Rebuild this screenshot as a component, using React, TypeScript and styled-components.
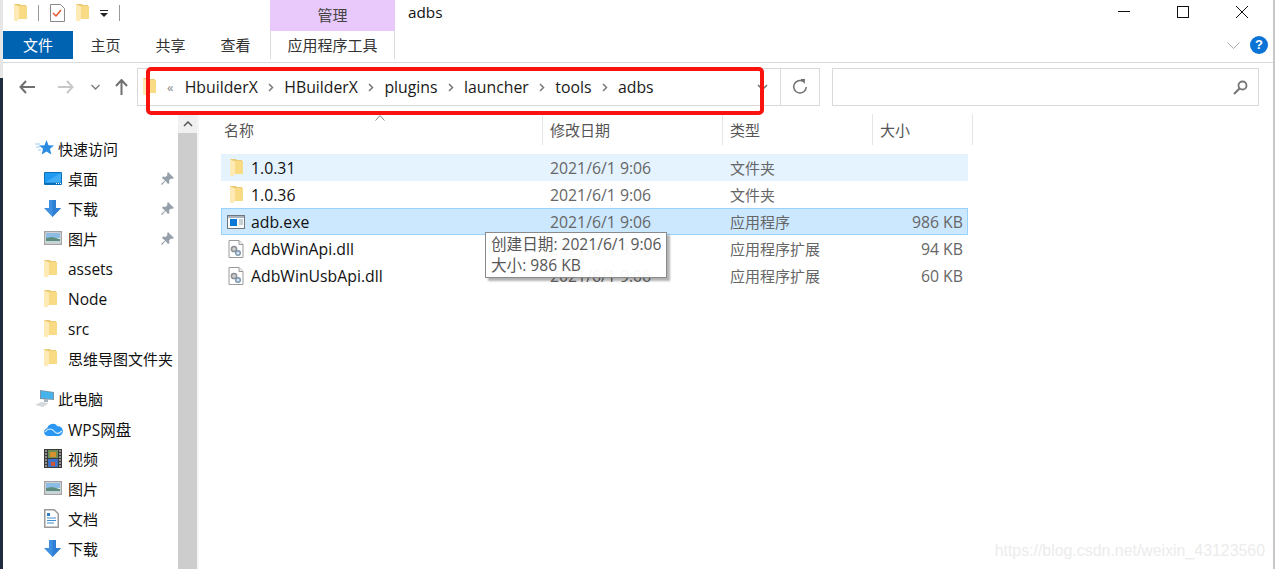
import styled, { createGlobalStyle } from "styled-components";

const FONT = `"Noto Sans CJK SC", "Noto Sans", sans-serif`;
const LATIN = `"Open Sans", "Noto Sans CJK SC", sans-serif`;

const Global = createGlobalStyle`
  html, body { margin: 0; padding: 0; background: #fff; overflow: hidden; }
  body { font-family: ${LATIN}; font-size: 14px; color: #1a1a1a; }
`;

const FolderIcon = () => (
  <svg width="13" height="18" viewBox="0 0 13 18">
    <path d="M0 0h6l1 1h5v14H3z" fill="#eccb76" />
    <path d="M4 2h9v13H3z" fill="#f9da85" />
    <path d="M0 .5l5 2V15l-2 2.500-3-1z" fill="#fdeab5" />
  </svg>
);

const DllIcon = () => (
  <svg width="16" height="18" viewBox="0 0 16 18">
    <path d="M1 .5h10l4 4v13H1z" fill="#fff" stroke="#9a9a9a" />
    <path d="M11 .5v4h4" fill="#eee" stroke="#9a9a9a" />
    <circle cx="6" cy="9" r="2.600" fill="#d0d0d0" stroke="#8a8f96" strokeWidth="1.500" />
    <circle cx="10" cy="13" r="2.300" fill="#d6e4f2" stroke="#7d96ad" strokeWidth="1.500" />
  </svg>
);

const ExeIcon = () => (
  <svg width="18" height="14" viewBox="0 0 18 14">
    <rect x=".5" y=".5" width="17" height="13" fill="#fafafa" stroke="#6f7780" />
    <path d="M1 1h16v2H1z" fill="#a9b3bd" />
    <rect x="3" y="4" width="7" height="7" fill="#0a78d7" />
    <path d="M12 5h4M12 7h4M12 9h4" stroke="#9aa4ae" />
  </svg>
);

const Star = () => (
  <svg width="19" height="16" viewBox="0 0 19 16">
    <path d="M0 4h5M1 7h4M3 10h3" stroke="#9ccbf0" />
    <path d="M11.500 0l2 5.200 5.500.3-4 3.300 1.200 5.700-4.700-3-4.700 3L8 8.800 4 5.500l5.500-.3z" fill="#2b8be0" />
  </svg>
);

const Desktop = () => (
  <svg width="18" height="13" viewBox="0 0 18 13">
    <rect width="18" height="13" rx="1" fill="#0b6fb8" />
    <rect x="1" y="1" width="16" height="9.500" fill="#1f9bf3" />
    <path d="M1 10.500L17 1v9.500z" fill="#41adf6" />
    <path d="M12 11.500h1M14 11.500h1M16 11.500h1" stroke="#fff" />
  </svg>
);

const Download = () => (
  <svg width="17" height="17" viewBox="0 0 17 17">
    <path d="M5 0h7v8h5l-8.500 9L0 8h5z" fill="#3f90e0" />
    <path d="M8.500 0H12v8h5l-8.500 9z" fill="#2f80d4" />
  </svg>
);

const Picture = () => (
  <svg width="18" height="14" viewBox="0 0 18 14">
    <rect x=".75" y=".75" width="16.500" height="12.500" fill="#fff" stroke="#a3a3a3" strokeWidth="1.500" />
    <rect x="2" y="2" width="14" height="5" fill="#8dbde6" />
    <path d="M2 7l6-1 8 2v4H2z" fill="#5e8d80" />
    <path d="M2 10h14v2H2z" fill="#c3d5d8" />
  </svg>
);

const Computer = () => (
  <svg width="19" height="17" viewBox="0 0 19 17">
    <path d="M5 0l14 2v8L5 9z" fill="#7d94a6" />
    <path d="M6 1l12 1.700v6.300L6 8z" fill="#46b4ec" />
    <path d="M0 15l6-3 8 1-6 4z" fill="#d5d9dc" />
    <path d="M9 9h4v3H9z" fill="#a9b4bc" />
  </svg>
);

const Cloud = () => (
  <svg width="19" height="14" viewBox="0 0 19 14">
    <path d="M4 14a3.900 3.900 0 0 1-.8-7.700A5.800 5.800 0 0 1 13.500 4.200 4.900 4.900 0 0 1 14.500 14z" fill="#2a97f2" />
    <path d="M1 10c3-4 7-4 10 0 1.500 2 4 2 7-1" stroke="#d6ecfd" strokeWidth="1.200" fill="none" />
  </svg>
);

const Film = () => (
  <svg width="18" height="19" viewBox="0 0 18 19">
    <rect width="18" height="19" fill="#3a3a3a" />
    <rect x="4" y="1" width="10" height="8" fill="#6f8f55" />
    <rect x="6" y="3" width="6" height="5" fill="#d9912f" />
    <rect x="4" y="10" width="10" height="8" fill="#3f72c7" />
    <rect x="7" y="13" width="4" height="4" fill="#c9583a" />
    <path d="M1 2h2M1 5h2M1 8h2M1 11h2M1 14h2M1 17h2M15 2h2M15 5h2M15 8h2M15 11h2M15 14h2M15 17h2" stroke="#e8e8e8" />
  </svg>
);

const Doc = () => (
  <svg width="15" height="19" viewBox="0 0 15 19">
    <path d="M.75.750h9.500l4 4v13.500H.75z" fill="#fff" stroke="#9a9a9a" strokeWidth="1.500" />
    <path d="M3 4h3v3H3z" fill="#2b7fc9" />
    <path d="M3 9h9M3 11.500h9M3 14h7" stroke="#3f8fd0" />
  </svg>
);

const Pin = () => (
  <svg width="13" height="13" viewBox="0 0 13 13">
    <path d="M7 0l6 6-2 1-1-.5L8 8.500 8.500 11 7 12 4.500 9 1 13l-1-1 4-3.500L1 6l1-1.500L4.500 5 6.500 3 6 2z" fill="#96a0aa" />
  </svg>
);

const Chevron = () => (
  <svg width="6" height="9" viewBox="0 0 6 9">
    <path d="M1 1l3.500 3.500L1 8" fill="none" stroke="#7a7a7a" strokeWidth="1.500" />
  </svg>
);

const Window = styled.div`
  position: relative;
  width: 1275px;
  height: 569px;
  overflow: hidden;
  background:
    linear-gradient(#c8c8c8, #c8c8c8) right top / 2px 100% no-repeat,
    linear-gradient(#e6e6e6 78px, #1f2b3f 78px) left top / 3px 100% no-repeat,
    #fff;
`;

const TitleBar = styled.div`
  height: 31px;
  display: flex;
  align-items: center;
  padding-left: 14px;
`;

const QuickAccess = styled.div`
  width: 256px;
  display: flex;
  align-items: center;
  gap: 11px;
  margin-top: -5px;
`;

const QuickSep = styled.div`
  width: 1px;
  height: 16px;
  background: #9a9a9a;
`;

const ManageTab = styled.div`
  width: 125px;
  height: 31px;
  background: #e9c9fb;
  color: #444;
  font: 15px/30px ${FONT};
  text-align: center;
`;

const Title = styled.div`
  margin-left: 13px;
  margin-top: -7px;
  font-size: 15.300px;
  color: #111;
  flex: 1;
`;

const WinButtons = styled.div`
  display: flex;
  align-items: center;
  gap: 47px;
  padding-right: 27px;
  margin-top: -7px;
`;

const RibbonTabs = styled.div`
  height: 28px;
  display: flex;
  align-items: stretch;
  padding-left: 3px;
`;

const Tab = styled.div<{ $active?: boolean; $tool?: boolean }>`
  font: 15px/28px ${FONT};
  color: ${(p) => (p.$active ? "#fff" : "#333")};
  background: ${(p) => (p.$active ? "#0063b1" : "transparent")};
  width: ${(p) => (p.$active ? "70px" : p.$tool ? "125px" : "65px")};
  margin-left: ${(p) => (p.$tool ? "2px" : "0")};
  text-align: center;
  box-sizing: border-box;
  border-left: ${(p) => (p.$tool ? "1px solid #dadada" : "none")};
  border-right: ${(p) => (p.$tool ? "1px solid #dadada" : "none")};
`;

const TabSpacer = styled.div`
  flex: 1;
`;

const RibbonEnd = styled.div`
  display: flex;
  align-items: center;
  gap: 10px;
  padding-right: 7px;
`;

const Help = styled.div`
  width: 18px;
  height: 18px;
  border-radius: 50%;
  background: #0a74d6;
  color: #fff;
  font: bold 13px/18px "Liberation Sans", sans-serif;
  text-align: center;
`;

const RibbonLine = styled.div`
  height: 1px;
  margin: 3px 2px 0 3px;
  background: #dadada;
`;

const NavRow = styled.div`
  height: 38px;
  margin-top: 5px;
  display: flex;
  align-items: center;
  padding-left: 19px;
`;

const NavButtons = styled.div`
  width: 118px;
  display: flex;
  align-items: center;
`;

const NavArrow = styled.svg<{ $gap?: number }>`
  margin-left: ${(p) => p.$gap ?? 0}px;
`;

const Address = styled.div`
  width: 683px;
  height: 38px;
  box-sizing: border-box;
  border: 1px solid #d9d9d9;
  display: flex;
  align-items: center;
  padding-left: 5px;
`;

const Crumbs = styled.div`
  flex: 1;
  display: flex;
  align-items: center;
  gap: 10.250px;
  margin-left: 11px;
  font-size: 15.800px;
  color: #1a1a1a;
`;

const Caret = styled.span`
  color: #888;
  font-size: 13px;
  margin-right: 1px;
`;

const AddressDrop = styled.svg`
  margin-right: 12px;
`;

const Refresh = styled.div`
  width: 39px;
  height: 36px;
  box-sizing: border-box;
  border-left: 1px solid #d9d9d9;
  display: flex;
  align-items: center;
  justify-content: center;
`;

const Search = styled.div`
  width: 427px;
  height: 38px;
  box-sizing: border-box;
  margin-left: 12px;
  border: 1px solid #d9d9d9;
  display: flex;
  align-items: center;
  justify-content: flex-end;
  padding-right: 10px;
`;

const Content = styled.div`
  height: 455px;
  margin-top: 8px;
  margin-left: 3px;
  display: flex;
`;

const Sidebar = styled.div`
  width: 175px;
  padding-top: 19px;
  box-sizing: border-box;
`;

const NavGroup = styled.div<{ $gap?: boolean }>`
  height: 30px;
  display: flex;
  align-items: center;
  gap: 4px;
  margin-top: ${(p) => (p.$gap ? "10px" : "0")};
  padding-left: 32px;
  font: 15px ${FONT};
  color: #111;
`;

const NavItem = styled.div<{ $latin?: boolean }>`
  height: 30px;
  box-sizing: border-box;
  display: flex;
  align-items: center;
  padding: ${(p) => (p.$latin ? "2px" : "0")} 4px 0 41px;
  font-family: ${(p) => (p.$latin ? LATIN : FONT)};
  font-size: ${(p) => (p.$latin ? "15.500px" : "15px")};
  color: #111;
`;

const ItemIcon = styled.span`
  width: 24px;
  display: flex;
  align-items: center;
`;

const ItemLabel = styled.span`
  flex: 1;
  white-space: nowrap;
`;

const Scrollbar = styled.div`
  width: 19px;
  background: #cdcdcd;
  flex: none;
`;

const ScrollUp = styled.div`
  height: 19px;
  background: #f0f0f0;
  display: flex;
  align-items: center;
  justify-content: center;
`;

const Main = styled.div`
  flex: 1;
  padding-left: 22px;
  border-left: 2px solid #f5f5f5;
`;

const Header = styled.div`
  height: 31px;
  display: flex;
  position: relative;
`;

const HeadCell = styled.div<{ $w: number; $first?: boolean }>`
  width: ${(p) => p.$w}px;
  box-sizing: border-box;
  padding-left: ${(p) => (p.$first ? 3 : 7)}px;
  border-right: 1px solid #e5e5e5;
  font: 15px/31px ${FONT};
  color: #555;
  flex: none;
`;

const SortMark = styled.div`
  position: absolute;
  left: 154px;
  top: 1px;
  line-height: 0;
`;

const Rows = styled.div`
  margin-top: 9px;
  width: 747px;
`;

const Row = styled.div<{ $state?: "hover" | "selected" }>`
  height: 27px;
  box-sizing: border-box;
  display: flex;
  align-items: center;
  font-size: 15.800px;
  color: #666;
  background: ${(p) =>
    p.$state === "hover" ? "#e5f3ff" : p.$state === "selected" ? "#cce8ff" : "transparent"};
  border: 1px solid ${(p) => (p.$state === "selected" ? "#99d1ff" : "transparent")};
`;

const NameCell = styled.div`
  width: 328px;
  display: flex;
  align-items: center;
  color: #111;
  padding-left: 5px;
  box-sizing: border-box;
  flex: none;
`;

const NameIcon = styled.span`
  width: 24px;
  display: flex;
  justify-content: center;
  padding-right: 6px;
  box-sizing: border-box;
`;

const DateCell = styled.div`
  width: 180px;
  flex: none;
`;

const TypeCell = styled.div`
  width: 130px;
  flex: none;
  font: 15px ${FONT};
  margin-top: -1px;
`;

const SizeCell = styled.div`
  flex: 1;
  text-align: right;
  padding-right: 4px;
`;

const Tooltip = styled.div`
  position: absolute;
  left: 485px;
  top: 232px;
  width: 182px;
  height: 46px;
  box-sizing: border-box;
  padding: 0 5px;
  border: 1px solid #8a8a8a;
  background: rgba(255, 255, 255, 0.94);
  box-shadow: 3px 3px 2px rgba(0, 0, 0, 0.3);
  font: 15.600px/21px ${LATIN};
  color: #575757;
  white-space: nowrap;
  display: flex;
  flex-direction: column;
  justify-content: center;
`;

const RedBox = styled.div`
  position: absolute;
  left: 146px;
  top: 67px;
  width: 618px;
  height: 48px;
  box-sizing: border-box;
  border: 4px solid #f8130f;
  border-radius: 5px;
`;

const Watermark = styled.div`
  position: absolute;
  right: 10px;
  bottom: 9px;
  font: 15.900px "Liberation Sans", sans-serif;
  color: #ececec;
`;

const quickItems = [
  { icon: <Star />, label: "快速访问", group: true },
  { icon: <Desktop />, label: "桌面", pin: true },
  { icon: <Download />, label: "下载", pin: true },
  { icon: <Picture />, label: "图片", pin: true },
  { icon: <FolderIcon />, label: "assets", latin: true },
  { icon: <FolderIcon />, label: "Node", latin: true },
  { icon: <FolderIcon />, label: "src", latin: true },
  { icon: <FolderIcon />, label: "思维导图文件夹" },
  { icon: <Computer />, label: "此电脑", group: true, gap: true },
  { icon: <Cloud />, label: "WPS网盘", latin: true },
  { icon: <Film />, label: "视频" },
  { icon: <Picture />, label: "图片" },
  { icon: <Doc />, label: "文档" },
  { icon: <Download />, label: "下载" },
];

const files = [
  { icon: <FolderIcon />, name: "1.0.31", type: "文件夹", size: "", state: "hover" as const },
  { icon: <FolderIcon />, name: "1.0.36", type: "文件夹", size: "" },
  { icon: <ExeIcon />, name: "adb.exe", type: "应用程序", size: "986 KB", state: "selected" as const },
  { icon: <DllIcon />, name: "AdbWinApi.dll", type: "应用程序扩展", size: "94 KB" },
  { icon: <DllIcon />, name: "AdbWinUsbApi.dll", type: "应用程序扩展", size: "60 KB" },
];

const crumbs = ["HbuilderX", "HBuilderX", "plugins", "launcher", "tools", "adbs"];

function Crumb({ text, last }: { text: string; last: boolean }) {
  return (
    <>
      <span>{text}</span>
      {!last && <Chevron />}
    </>
  );
}

export default function App() {
  return (
    <Window>
      <Global />
      <TitleBar>
        <QuickAccess>
          <FolderIcon />
          <QuickSep />
          <svg width="15" height="18" viewBox="0 0 15 18">
            <path d="M.5.500h10l4 4v13H.5z" fill="#fff" stroke="#8a8a8a" />
            <path d="M3 9l3 3 5-6" fill="none" stroke="#e8562a" strokeWidth="1.500" />
          </svg>
          <FolderIcon />
          <svg width="8" height="7" viewBox="0 0 8 7">
            <path d="M0 0h8v1H0zM0 3h8L4 7z" fill="#222" />
          </svg>
          <QuickSep />
        </QuickAccess>
        <ManageTab>管理</ManageTab>
        <Title>adbs</Title>
        <WinButtons>
          <svg width="12" height="12" viewBox="0 0 12 12">
            <path d="M0 5.500h12" stroke="#111" />
          </svg>
          <svg width="12" height="12" viewBox="0 0 12 12">
            <rect x=".5" y=".5" width="11" height="11" fill="none" stroke="#111" />
          </svg>
          <svg width="12" height="12" viewBox="0 0 12 12">
            <path d="M0 0l12 12M12 0L0 12" stroke="#111" />
          </svg>
        </WinButtons>
      </TitleBar>
      <RibbonTabs>
        <Tab $active>文件</Tab>
        <Tab>主页</Tab>
        <Tab>共享</Tab>
        <Tab>查看</Tab>
        <Tab $tool>应用程序工具</Tab>
        <TabSpacer />
        <RibbonEnd>
          <svg width="13" height="7" viewBox="0 0 13 7">
            <path d="M.5.500l6 6 6-6" fill="none" stroke="#a8a8a8" />
          </svg>
          <Help>?</Help>
        </RibbonEnd>
      </RibbonTabs>
      <RibbonLine />
      <NavRow>
        <NavButtons>
          <NavArrow width="16" height="14" viewBox="0 0 16 14">
            <path d="M7 1L1.500 7 7 13M2 7h14" fill="none" stroke="#707070" strokeWidth="2" />
          </NavArrow>
          <NavArrow $gap={23} width="16" height="14" viewBox="0 0 16 14">
            <path d="M9 1l5.500 6L9 13M14 7H0" fill="none" stroke="#c8c8c8" strokeWidth="2" />
          </NavArrow>
          <NavArrow $gap={17} width="9" height="6" viewBox="0 0 9 6">
            <path d="M.5 1l4 4 4-4" fill="none" stroke="#808080" strokeWidth="1.500" />
          </NavArrow>
          <NavArrow $gap={15} width="13" height="16" viewBox="0 0 13 16">
            <path d="M1 7l5.500-6L12 7M6.500 1v15" fill="none" stroke="#707070" strokeWidth="2" />
          </NavArrow>
        </NavButtons>
        <Address>
          <FolderIcon />
          <Crumbs>
            <Caret>«</Caret>
            {crumbs.map((c, i) => (
              <Crumb key={c + i} text={c} last={i === crumbs.length - 1} />
            ))}
          </Crumbs>
          <AddressDrop width="11" height="7" viewBox="0 0 11 7">
            <path d="M1 1l4.500 4.500L10 1" fill="none" stroke="#707070" strokeWidth="1.500" />
          </AddressDrop>
          <Refresh>
            <svg width="16" height="16" viewBox="0 0 16 16">
              <path d="M11.500 2.500A6.300 6.300 0 1 0 14.300 8" fill="none" stroke="#707070" strokeWidth="1.500" />
              <path d="M8.500 0l4.500 0-.3 5z" fill="#707070" />
            </svg>
          </Refresh>
        </Address>
        <Search>
          <svg width="15" height="15" viewBox="0 0 15 15">
            <circle cx="9.500" cy="5.500" r="4" fill="none" stroke="#777" strokeWidth="1.800" />
            <path d="M6.500 8.500L1 14" stroke="#777" strokeWidth="2.200" />
          </svg>
        </Search>
      </NavRow>
      <Content>
        <Sidebar>
          {quickItems.map((it, i) =>
            it.group ? (
              <NavGroup key={i} $gap={it.gap}>
                {it.icon}
                <ItemLabel>{it.label}</ItemLabel>
              </NavGroup>
            ) : (
              <NavItem key={i} $latin={it.latin}>
                <ItemIcon>{it.icon}</ItemIcon>
                <ItemLabel>{it.label}</ItemLabel>
                {it.pin && <Pin />}
              </NavItem>
            )
          )}
        </Sidebar>
        <Scrollbar>
          <ScrollUp>
            <svg width="10" height="6" viewBox="0 0 10 6">
              <path d="M1 5l4-4 4 4" fill="none" stroke="#555" strokeWidth="1.500" />
            </svg>
          </ScrollUp>
        </Scrollbar>
        <Main>
          <Header>
            <HeadCell $w={322} $first>
              名称
            </HeadCell>
            <HeadCell $w={180}>修改日期</HeadCell>
            <HeadCell $w={150}>类型</HeadCell>
            <HeadCell $w={100}>大小</HeadCell>
            <SortMark>
              <svg width="10" height="6" viewBox="0 0 10 6">
                <path d="M.5 5.500l4.500-5 4.500 5" fill="none" stroke="#888" />
              </svg>
            </SortMark>
          </Header>
          <Rows>
            {files.map((f) => (
              <Row key={f.name} $state={f.state}>
                <NameCell>
                  <NameIcon>{f.icon}</NameIcon>
                  {f.name}
                </NameCell>
                <DateCell>2021/6/1 9:06</DateCell>
                <TypeCell>{f.type}</TypeCell>
                <SizeCell>{f.size}</SizeCell>
              </Row>
            ))}
          </Rows>
        </Main>
      </Content>
      <Tooltip>
        <div>创建日期: 2021/6/1 9:06</div>
        <div>大小: 986 KB</div>
      </Tooltip>
      <RedBox />
      <Watermark>https://blog.csdn.net/weixin_43123560</Watermark>
    </Window>
  );
}
